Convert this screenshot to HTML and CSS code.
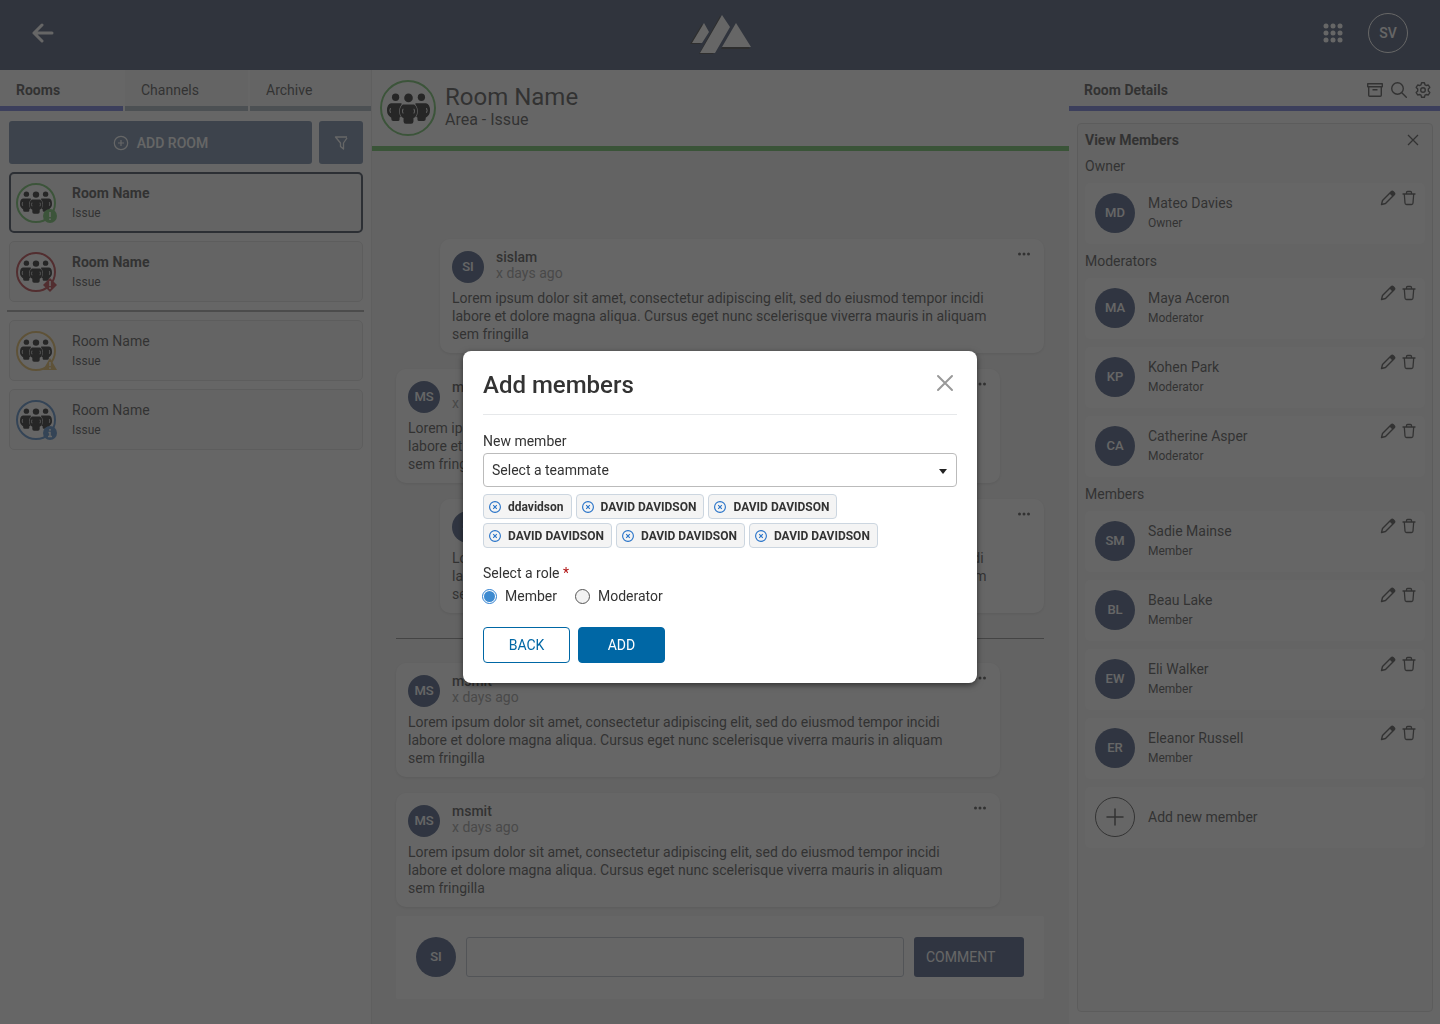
FILE: index.html
```html
<!DOCTYPE html>
<html lang="en">
<head>
<meta charset="utf-8">
<meta name="viewport" content="width=device-width, initial-scale=1">
<title>Room Name</title>
<link rel="stylesheet" href="styles.css">
</head>
<body>
<svg class="sprite" aria-hidden="true">
  <symbol id="people" viewBox="0 0 130 92">
    <g fill="#000">
      <circle cx="26" cy="12" r="11"/><circle cx="104" cy="12" r="11"/>
      <path d="M12 30h32v40l-6 3v6q0 5-5 5H19q-6 0-6-6V74Q0 66 0 52q0-20 12-22Z"/>
      <path d="M118 30H86v40l6 3v6q0 5 5 5h14q6 0 6-6v-4q13-8 13-22 0-20-12-22Z"/>
    </g>
    <g fill="none" stroke="#fff" stroke-width="3" stroke-linecap="round"><path d="M10 46q-3 6 0 12M120 46q3 6 0 12"/></g>
    <path d="M48 34h34q9 6 9 20 0 16-11 21v10q0 7-7 7H57q-7 0-7-7V75Q39 70 39 54q0-14 9-20Z" fill="#000" stroke="#fff" stroke-width="4" paint-order="stroke"/>
    <circle cx="65" cy="14" r="13" fill="#000"/>
    <g fill="none" stroke="#fff" stroke-width="3" stroke-linecap="round"><path d="M48 48q-3 6 0 12M82 48q3 6 0 12"/></g>
  </symbol>
  <symbol id="pencil" viewBox="0 0 16 16">
    <path d="m1.500 14.500 1-4L11.200 1.800q1-1 2.100 0l.9.900q1 1 0 2.100L5.500 13.500Z" fill="none" stroke="currentColor" stroke-width="1.400" stroke-linejoin="round"/>
    <path d="m9.500 3.500 1.700-1.700q1-1 2.100 0l.9.900q1 1 0 2.100L12.500 6.500Z" fill="currentColor"/>
  </symbol>
  <symbol id="trash" viewBox="0 0 14 16">
    <path d="M1 4h12M4.500 4V2.500q0-1 1-1h3q1 0 1 1V4M2.300 4l.7 9q.1 1.500 1.500 1.500h5q1.400 0 1.500-1.500l.7-9" fill="none" stroke="currentColor" stroke-width="1.300" stroke-linecap="round" stroke-linejoin="round"/>
  </symbol>
  <symbol id="dots" viewBox="0 0 14 4"><g fill="currentColor"><circle cx="2.500" cy="2" r="1.500"/><circle cx="7" cy="2" r="1.500"/><circle cx="11.500" cy="2" r="1.500"/></g></symbol>
  <symbol id="cross" viewBox="0 0 20 20"><path d="m3 3 14 14M17 3 3 17" fill="none" stroke="currentColor" stroke-width="2" stroke-linecap="round"/></symbol>
  <symbol id="chip-x" viewBox="0 0 12 12"><g fill="none" stroke="currentColor" stroke-width="1.100"><circle cx="6" cy="6" r="5.400"/><path d="m4.200 4.200 3.600 3.600M7.800 4.200 4.200 7.800"/></g></symbol>
</svg>

<header class="topbar">
  <button class="icon-btn back" aria-label="Back"><svg width="22" height="20" viewBox="0 0 22 20"><path d="M20 10H2M10 2 2 10l8 8" fill="none" stroke="#fff" stroke-width="3" stroke-linecap="round" stroke-linejoin="round"/></svg></button>
  <svg class="logo" width="64" height="44" viewBox="0 0 64 44" role="img" aria-label="Logo">
    <g fill="#222"><path d="M2 33 14 13l5 9-7 11ZM11 43 32 5l8 12-15 26ZM33 38l15-25 14 25Z"/></g>
    <g fill="#fff"><path d="M4 32 16 12l5 9-7 11ZM12 42 34 4l8 12-15 26ZM34 36l14-24 15 24Z"/></g>
  </svg>
  <div class="topbar-end">
    <button class="icon-btn" aria-label="Apps"><svg width="20" height="20" viewBox="0 0 20 20" fill="#fff"><circle cx="3" cy="3" r="2.500"/><circle cx="10" cy="3" r="2.500"/><circle cx="17" cy="3" r="2.500"/><circle cx="3" cy="10" r="2.500"/><circle cx="10" cy="10" r="2.500"/><circle cx="17" cy="10" r="2.500"/><circle cx="3" cy="17" r="2.500"/><circle cx="10" cy="17" r="2.500"/><circle cx="17" cy="17" r="2.500"/></svg></button>
    <button class="profile">SV</button>
  </div>
</header>

<div class="layout">
  <aside class="rooms">
    <nav class="tabs">
      <a class="tab active" href="#rooms">Rooms</a>
      <a class="tab" href="#channels">Channels</a>
      <a class="tab" href="#archive">Archive</a>
    </nav>
    <div class="room-list">
      <div class="room-actions">
        <button class="soft-btn add-room"><svg width="16" height="16" viewBox="0 0 16 16"><g fill="none" stroke="currentColor" stroke-width="1.200"><circle cx="8" cy="8" r="6.700"/><path d="M8 5v6M5 8h6"/></g></svg>ADD ROOM</button>
        <button class="soft-btn filter" aria-label="Filter"><svg width="16" height="16" viewBox="0 0 16 16"><path d="M14 2H2.500l5 6v3.500l3 2.500V8L14 3" fill="none" stroke="currentColor" stroke-width="1.300" stroke-linejoin="round"/></svg></button>
      </div>
      <a class="room selected unread" href="#room-1">
        <span class="room-icon green"><svg class="people"><use href="#people"/></svg><svg class="status" viewBox="0 0 14 14"><circle cx="7" cy="7" r="7" fill="currentColor"/><path d="M7 3v5M7 9.500v1.600" stroke="#fff" stroke-width="1.600"/></svg></span>
        <span class="two-line"><span class="name">Room Name</span><span class="sub">Issue</span></span>
      </a>
      <a class="room unread" href="#room-2">
        <span class="room-icon red"><svg class="people"><use href="#people"/></svg><svg class="status" viewBox="0 0 14 14"><path d="m7 0 7 7-7 7-7-7Z" fill="currentColor"/><path d="M7 3v5M7 9.300v1.600" stroke="#fff" stroke-width="1.600"/></svg></span>
        <span class="two-line"><span class="name">Room Name</span><span class="sub">Issue</span></span>
      </a>
      <hr class="room-rule">
      <a class="room" href="#room-3">
        <span class="room-icon yellow"><svg class="people"><use href="#people"/></svg><svg class="status" viewBox="0 0 14 14"><path d="M7 1 14 13H0Z" fill="currentColor"/><path d="M7 5v4M7 10.300v1.600" stroke="#fff" stroke-width="1.400"/></svg></span>
        <span class="two-line"><span class="name">Room Name</span><span class="sub">Issue</span></span>
      </a>
      <a class="room" href="#room-4">
        <span class="room-icon blue"><svg class="people"><use href="#people"/></svg><svg class="status" viewBox="0 0 14 14"><circle cx="7" cy="7" r="7" fill="currentColor"/><path d="M7 3v1.800M5.500 6.500H7V10.500M5 10.500h4" fill="none" stroke="#fff" stroke-width="1.500"/></svg></span>
        <span class="two-line"><span class="name">Room Name</span><span class="sub">Issue</span></span>
      </a>
    </div>
  </aside>

  <main class="chat">
    <header class="chat-head">
      <span class="room-icon large green"><svg class="people"><use href="#people"/></svg></span>
      <div class="chat-title"><h1>Room Name</h1><p>Area - Issue</p></div>
    </header>
    <div class="feed">
      <article class="message own">
        <div class="message-head"><span class="avatar small">SI</span><div class="byline"><strong>sislam</strong><time>x days ago</time></div><button class="icon-btn more" aria-label="More"><svg width="14" height="4"><use href="#dots"/></svg></button></div>
        <p>Lorem ipsum dolor sit amet, consectetur adipiscing elit, sed do eiusmod tempor incidi labore et dolore magna aliqua. Cursus eget nunc scelerisque viverra mauris in aliquam sem fringilla</p>
      </article>
      <article class="message">
        <div class="message-head"><span class="avatar small">MS</span><div class="byline"><strong>msmit</strong><time>x days ago</time></div><button class="icon-btn more" aria-label="More"><svg width="14" height="4"><use href="#dots"/></svg></button></div>
        <p>Lorem ipsum dolor sit amet, consectetur adipiscing elit, sed do eiusmod tempor incidi labore et dolore magna aliqua. Cursus eget nunc scelerisque viverra mauris in aliquam sem fringilla</p>
      </article>
      <article class="message own">
        <div class="message-head"><span class="avatar small">SI</span><div class="byline"><strong>sislam</strong><time>x days ago</time></div><button class="icon-btn more" aria-label="More"><svg width="14" height="4"><use href="#dots"/></svg></button></div>
        <p>Lorem ipsum dolor sit amet, consectetur adipiscing elit, sed do eiusmod tempor incidi labore et dolore magna aliqua. Cursus eget nunc scelerisque viverra mauris in aliquam sem fringilla</p>
      </article>
      <hr class="feed-rule">
      <article class="message">
        <div class="message-head"><span class="avatar small">MS</span><div class="byline"><strong>msmit</strong><time>x days ago</time></div><button class="icon-btn more" aria-label="More"><svg width="14" height="4"><use href="#dots"/></svg></button></div>
        <p>Lorem ipsum dolor sit amet, consectetur adipiscing elit, sed do eiusmod tempor incidi labore et dolore magna aliqua. Cursus eget nunc scelerisque viverra mauris in aliquam sem fringilla</p>
      </article>
      <article class="message">
        <div class="message-head"><span class="avatar small">MS</span><div class="byline"><strong>msmit</strong><time>x days ago</time></div><button class="icon-btn more" aria-label="More"><svg width="14" height="4"><use href="#dots"/></svg></button></div>
        <p>Lorem ipsum dolor sit amet, consectetur adipiscing elit, sed do eiusmod tempor incidi labore et dolore magna aliqua. Cursus eget nunc scelerisque viverra mauris in aliquam sem fringilla</p>
      </article>
      <form class="composer">
        <span class="avatar">SI</span>
        <input type="text" aria-label="Comment">
        <button type="button">COMMENT</button>
      </form>
    </div>
  </main>

  <aside class="details">
    <header class="details-head">
      <h2>Room Details</h2>
      <button class="icon-btn" aria-label="Archive"><svg width="16" height="16" viewBox="0 0 16 16"><path d="M.7 1.700h14.600v3H.7ZM1.700 4.700v8.500q0 1 1 1h10.600q1 0 1-1V4.700M5.500 7.700h5" fill="none" stroke="currentColor" stroke-width="1.400" stroke-linejoin="round"/></svg></button>
      <button class="icon-btn" aria-label="Search"><svg width="16" height="16" viewBox="0 0 16 16"><g fill="none" stroke="currentColor" stroke-width="1.400" stroke-linecap="round"><circle cx="6.500" cy="6.500" r="5.800"/><path d="m10.800 10.800 4.500 4.500"/></g></svg></button>
      <button class="icon-btn" aria-label="Settings"><svg width="16" height="16" viewBox="0 0 16 16"><g fill="none" stroke="currentColor" stroke-width="1.400" stroke-linejoin="round"><circle cx="8" cy="8" r="2.300"/><path d="M6.600.8h2.800l.6 2 1.200.7 2.100-.5 1.500 2.400L13.300 7v2l1.500 1.600-1.500 2.400-2.100-.5-1.200.7-.6 2H6.600l-.6-2-1.200-.7-2.100.5-1.500-2.400L2.700 9V7L1.200 5.400 2.700 3l2.100.5L6 2.800Z"/></g></svg></button>
    </header>
    <section class="members">
      <div class="members-head"><h2>View Members</h2><button class="icon-btn" aria-label="Close"><svg width="14" height="14" viewBox="0 0 14 14"><path d="m2 2 10 10M12 2 2 12" stroke="currentColor" stroke-width="1.300"/></svg></button></div>
      <h3>Owner</h3>
      <ul>
        <li><span class="avatar">MD</span><span class="two-line"><span class="name">Mateo Davies</span><span class="sub">Owner</span></span><span class="row-actions"><button class="icon-btn" aria-label="Edit"><svg width="16" height="16"><use href="#pencil"/></svg></button><button class="icon-btn" aria-label="Delete"><svg width="14" height="16"><use href="#trash"/></svg></button></span></li>
      </ul>
      <h3>Moderators</h3>
      <ul>
        <li><span class="avatar">MA</span><span class="two-line"><span class="name">Maya Aceron</span><span class="sub">Moderator</span></span><span class="row-actions"><button class="icon-btn" aria-label="Edit"><svg width="16" height="16"><use href="#pencil"/></svg></button><button class="icon-btn" aria-label="Delete"><svg width="14" height="16"><use href="#trash"/></svg></button></span></li>
        <li><span class="avatar">KP</span><span class="two-line"><span class="name">Kohen Park</span><span class="sub">Moderator</span></span><span class="row-actions"><button class="icon-btn" aria-label="Edit"><svg width="16" height="16"><use href="#pencil"/></svg></button><button class="icon-btn" aria-label="Delete"><svg width="14" height="16"><use href="#trash"/></svg></button></span></li>
        <li><span class="avatar">CA</span><span class="two-line"><span class="name">Catherine Asper</span><span class="sub">Moderator</span></span><span class="row-actions"><button class="icon-btn" aria-label="Edit"><svg width="16" height="16"><use href="#pencil"/></svg></button><button class="icon-btn" aria-label="Delete"><svg width="14" height="16"><use href="#trash"/></svg></button></span></li>
      </ul>
      <h3>Members</h3>
      <ul>
        <li><span class="avatar">SM</span><span class="two-line"><span class="name">Sadie Mainse</span><span class="sub">Member</span></span><span class="row-actions"><button class="icon-btn" aria-label="Edit"><svg width="16" height="16"><use href="#pencil"/></svg></button><button class="icon-btn" aria-label="Delete"><svg width="14" height="16"><use href="#trash"/></svg></button></span></li>
        <li><span class="avatar">BL</span><span class="two-line"><span class="name">Beau Lake</span><span class="sub">Member</span></span><span class="row-actions"><button class="icon-btn" aria-label="Edit"><svg width="16" height="16"><use href="#pencil"/></svg></button><button class="icon-btn" aria-label="Delete"><svg width="14" height="16"><use href="#trash"/></svg></button></span></li>
        <li><span class="avatar">EW</span><span class="two-line"><span class="name">Eli Walker</span><span class="sub">Member</span></span><span class="row-actions"><button class="icon-btn" aria-label="Edit"><svg width="16" height="16"><use href="#pencil"/></svg></button><button class="icon-btn" aria-label="Delete"><svg width="14" height="16"><use href="#trash"/></svg></button></span></li>
        <li><span class="avatar">ER</span><span class="two-line"><span class="name">Eleanor Russell</span><span class="sub">Member</span></span><span class="row-actions"><button class="icon-btn" aria-label="Edit"><svg width="16" height="16"><use href="#pencil"/></svg></button><button class="icon-btn" aria-label="Delete"><svg width="14" height="16"><use href="#trash"/></svg></button></span></li>
      </ul>
      <button class="add-member"><span class="add-circle"><svg width="18" height="18" viewBox="0 0 18 18"><path d="M9 1v16M1 9h16" stroke="currentColor" stroke-width="1.500" stroke-linecap="round"/></svg></span>Add new member</button>
    </section>
  </aside>
</div>

<div class="backdrop">
  <form class="modal" role="dialog" aria-modal="true" aria-labelledby="modal-title">
    <header class="modal-head">
      <h2 id="modal-title">Add members</h2>
      <button type="button" class="icon-btn close" aria-label="Close"><svg width="20" height="20"><use href="#cross"/></svg></button>
    </header>
    <label class="field-label" for="teammate">New member</label>
    <div class="select-wrap">
      <select id="teammate"><option>Select a teammate</option></select>
      <svg class="caret" width="8" height="5" viewBox="0 0 8 5"><path d="M0 0h8L4 5Z" fill="#222"/></svg>
    </div>
    <div class="chips">
      <button type="button" class="chip"><svg width="12" height="12"><use href="#chip-x"/></svg>ddavidson</button>
      <button type="button" class="chip"><svg width="12" height="12"><use href="#chip-x"/></svg>DAVID DAVIDSON</button>
      <button type="button" class="chip"><svg width="12" height="12"><use href="#chip-x"/></svg>DAVID DAVIDSON</button>
      <button type="button" class="chip"><svg width="12" height="12"><use href="#chip-x"/></svg>DAVID DAVIDSON</button>
      <button type="button" class="chip"><svg width="12" height="12"><use href="#chip-x"/></svg>DAVID DAVIDSON</button>
      <button type="button" class="chip"><svg width="12" height="12"><use href="#chip-x"/></svg>DAVID DAVIDSON</button>
    </div>
    <fieldset>
      <legend>Select a role <span class="required">*</span></legend>
      <div class="radios">
        <label><input type="radio" name="role" checked>Member</label>
        <label><input type="radio" name="role">Moderator</label>
      </div>
    </fieldset>
    <div class="modal-actions">
      <button type="button" class="btn outline">BACK</button>
      <button type="button" class="btn">ADD</button>
    </div>
  </form>
</div>
</body>
</html>
```
FILE: styles.css
```css
* { box-sizing: border-box; }
body, h1, h2, h3, p, ul, hr, fieldset, legend { margin: 0; padding: 0; }
body {
  min-height: 100vh;
  display: flex;
  flex-direction: column;
  background: #fff;
  color: #333;
  font: 14px/18px Roboto, "Liberation Sans", sans-serif;
}
button, input, select { font: inherit; color: inherit; }
button { cursor: pointer; }
a { color: inherit; text-decoration: none; }
svg { display: block; flex: none; }
ul { list-style: none; }
.sprite { position: absolute; width: 0; height: 0; }
.icon-btn { display: flex; padding: 0; border: 0; background: none; }

/* Top bar */
.topbar {
  display: grid;
  grid-template-columns: 1fr auto 1fr;
  align-items: center;
  height: 70px;
  padding: 0 32px 4px;
  background: #2a3a5c;
}
.back { justify-self: start; }
.topbar-end { display: flex; justify-content: flex-end; align-items: center; gap: 25px; }
.profile {
  width: 40px;
  height: 40px;
  padding: 0;
  border: 1px solid #fff;
  border-radius: 50%;
  background: none;
  color: #fff;
  font-weight: 500;
}

.layout {
  flex: 1;
  display: grid;
  grid-template-columns: 372px minmax(0, 1fr) 371px;
}

/* Rooms */
.rooms { border-right: 1px solid #e4e4e4; }
.tabs { display: grid; grid-template-columns: 123px 123px 1fr; gap: 2px; }
.tab {
  height: 41px;
  padding: 11px 16px 0;
  border-bottom: 5px solid #98a8b4;
  background: #f6f6f6;
}
.tab.active { border-color: #5866d8; background: #fff; font-weight: 700; }
.room-list { display: flex; flex-direction: column; gap: 8px; padding: 10px 8px 0 9px; }
.room-actions { display: flex; gap: 7px; }
.soft-btn {
  display: flex;
  align-items: center;
  justify-content: center;
  gap: 8px;
  height: 43px;
  padding: 0;
  border: 0;
  border-radius: 3px;
  background: #5c7698;
  color: #fff;
  font-weight: 500;
}
.add-room { flex: 1; }
.filter { width: 44px; }
.room {
  display: flex;
  align-items: center;
  gap: 16px;
  height: 61px;
  padding: 0 6px;
  border: 1px solid #dcdcdc;
  border-radius: 5px;
  background: #f6f6f6;
}
.room.selected { padding: 0 5px; border: 2px solid #182438; }
.unread .name { font-weight: 700; }
.room-rule { height: 2px; border: 0; background: #999; margin: 0 -1px 0 -2px; }
.two-line { display: flex; flex-direction: column; gap: 2px; }
.sub { font-size: 12px; }
.room-icon {
  position: relative;
  display: flex;
  align-items: center;
  justify-content: center;
  width: 40px;
  height: 40px;
  border: 2px solid currentColor;
  border-radius: 50%;
  background: #fff;
}
.people { width: 32px; height: 23px; }
.large { width: 56px; height: 56px; }
.large .people { width: 43px; height: 31px; }
.status { position: absolute; right: -3px; bottom: -2px; width: 14px; height: 14px; }
.green { color: #58b850; }
.red { color: #b02028; }
.yellow { color: #e0b048; }
.blue { color: #3878c0; }

/* Chat */
.chat { display: flex; flex-direction: column; background: #f3f3f3; }
.chat-head {
  display: flex;
  align-items: center;
  gap: 9px;
  height: 81px;
  padding: 0 8px;
  border-bottom: 5px solid #50b848;
  background: #fff;
}
.chat-title { padding-bottom: 4px; }
h1 { font-size: 24px; line-height: 28px; font-weight: 400; }
.chat-head p { font-size: 16px; line-height: 18px; }
.feed { display: flex; flex-direction: column; gap: 16px; padding: 88px 25px 25px 24px; }
.message {
  margin-right: 44px;
  padding: 12px 12px 10px;
  border-radius: 10px;
  background: #fff;
  box-shadow: 0 1px 3px #0002;
}
.message.own { margin: 0 0 0 44px; }
.message-head { display: flex; gap: 12px; padding-bottom: 6px; }
.byline { flex: 1; display: flex; flex-direction: column; line-height: 16px; margin-top: -2px; }
.byline strong { font-weight: 500; }
.byline time { color: #8c8c8c; }
.more { align-self: flex-start; padding: 1px 1px; }
.message p { padding-right: 24px; }
.feed-rule { height: 2px; border: 0; border-bottom: 1px solid #777; margin: 8px 0; }
.composer {
  display: flex;
  gap: 10px;
  margin-top: -7px;
  padding: 21px 20px 22px;
  background: #fff;
  border-radius: 2px;
}
.composer input { flex: 1; min-width: 0; border: 1px solid #b0b8c4; border-radius: 3px; background: #fff; }
.composer button {
  width: 110px;
  padding: 0 12px;
  border: 0;
  border-radius: 3px;
  background: #2a3f6c;
  color: #fff;
  text-align: left;
}
.avatar {
  display: flex;
  flex: none;
  align-items: center;
  justify-content: center;
  width: 40px;
  height: 40px;
  border-radius: 50%;
  background: #2a3f6c;
  color: #fff;
  font-size: 13px;
  font-weight: 500;
}
.avatar.small { width: 32px; height: 32px; }

/* Details */
.details { display: flex; flex-direction: column; }
.details-head {
  display: flex;
  align-items: center;
  gap: 8px;
  height: 41px;
  padding: 3px 9px 0 15px;
  border-bottom: 5px solid #5866d8;
}
h2 { flex: 1; font-size: 14px; line-height: 20px; font-weight: 700; }
.members {
  flex: 1;
  margin: 12px 7px 12px 8px;
  padding: 7px;
  border: 1px solid #d8d8d8;
  border-radius: 4px;
  background: #f5f5f5;
}
.members-head { display: flex; align-items: center; height: 18px; padding-right: 5px; }
h3 { font-size: 14px; font-weight: 400; line-height: 34px; }
.members ul { display: flex; flex-direction: column; gap: 8px; }
.members li, .add-member {
  display: flex;
  align-items: center;
  gap: 13px;
  width: 100%;
  height: 61px;
  padding: 0 10px 1px;
  border: 0;
  border-radius: 5px;
  background: #fff;
}
.row-actions { display: flex; gap: 6px; align-self: flex-start; margin: 7px -1px 0 auto; }
.add-member { margin-top: 8px; }
.add-circle {
  display: flex;
  align-items: center;
  justify-content: center;
  width: 40px;
  height: 40px;
  border: 1px solid #333;
  border-radius: 50%;
}

/* Dialog */
.backdrop {
  position: fixed;
  inset: 0;
  display: flex;
  align-items: center;
  justify-content: center;
  padding-top: 10px;
  background: rgba(51, 51, 51, 0.75);
}
.modal {
  width: 514px;
  max-width: 100%;
  padding: 20px;
  border-radius: 8px;
  background: #fff;
  box-shadow: 0 2px 6px #0008;
}
.modal-head {
  display: flex;
  align-items: flex-start;
  height: 44px;
  margin-bottom: 17px;
  border-bottom: 1px solid #e6e8ea;
}
.modal-head h2 { font-size: 24px; line-height: 28px; font-weight: 500; }
.close { padding: 2px; color: #999; }
.field-label { display: block; margin-bottom: 3px; }
.select-wrap { position: relative; }
select {
  display: block;
  width: 100%;
  height: 34px;
  padding: 0 24px 0 8px;
  border: 1px solid #bbb;
  border-radius: 4px;
  background: #fff;
  appearance: none;
}
.caret { position: absolute; right: 10px; top: 16px; pointer-events: none; }
.chips { display: flex; flex-wrap: wrap; gap: 4px; margin: 7px 0 16px; padding-right: 60px; }
.chip {
  display: flex;
  align-items: center;
  gap: 7px;
  height: 25px;
  padding: 0 7px 0 5px;
  border: 1px solid #ccd6e0;
  border-radius: 4px;
  background: #f4f4f4;
  font-size: 12px;
  font-weight: 700;
}
.chip svg { color: #2672c8; }
fieldset { border: 0; }
.required { color: #b01010; }
.radios { display: flex; gap: 18px; margin: 5px 0 22px -1px; }
.radios label { display: flex; align-items: center; gap: 8px; }
.radios input {
  width: 15px;
  height: 15px;
  margin: 0;
  padding: 1px;
  border: 1px solid #555;
  border-radius: 50%;
  background: #f2f2f2;
  appearance: none;
}
.radios input:checked { border-color: #2f80d0; background: #3d8ad0 content-box; }
.modal-actions { display: flex; gap: 8px; }
.btn {
  width: 87px;
  height: 36px;
  border: 1px solid #0067a5;
  border-radius: 4px;
  background: #0067a5;
  color: #fff;
}
.btn.outline { background: #fff; color: #0067a5; }
```
